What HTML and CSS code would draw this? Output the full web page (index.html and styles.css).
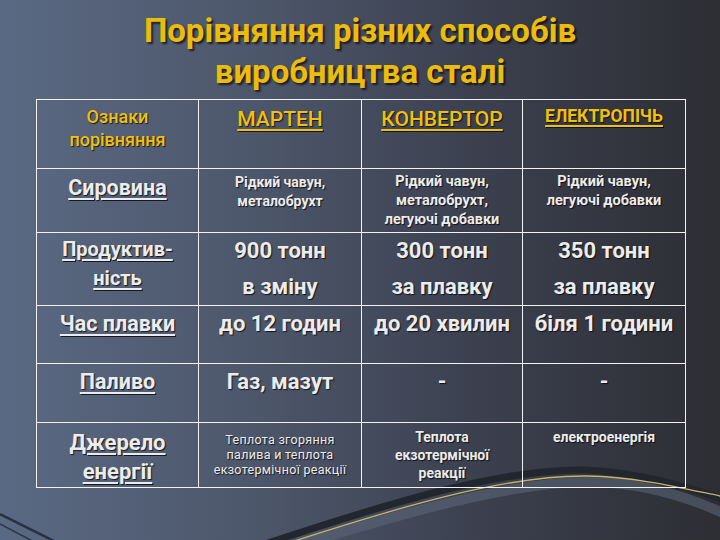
FILE: index.html
```html
<!DOCTYPE html>
<html lang="uk">
<head>
<meta charset="utf-8">
<link rel="stylesheet" href="styles.css">
</head>
<body>
<div class="slide">
  <svg class="deco" width="720" height="540" viewBox="0 0 720 540">
    <path d="M0,514 L62,545" stroke="#27303e" stroke-width="2.5" fill="none"/>
    <path d="M0,524 L40,545" stroke="#2c3442" stroke-width="1.5" fill="none"/>
    <path d="M262,545 C380,506 500,468 585,470 C640,472 690,488 725,500" stroke="#22262e" stroke-width="7" fill="none"/>
    <path d="M290,548 C400,514 510,482 587,482 C645,482 695,500 725,514" stroke="#5d677a" stroke-width="10" fill="none" opacity="0.55"/>
    <path d="M282,545 C393,509 504,475 587,476 C640,477 690,490 725,497" stroke="#c8b468" stroke-width="1.3" fill="none"/>
  </svg>
  <h1 class="title">Порівняння різних способів<br>виробництва сталі</h1>
  <table class="cmp">
    <colgroup>
      <col class="c1"><col class="c2"><col class="c3"><col class="c4">
    </colgroup>
    <tr class="r1">
      <td><div class="hdr-small">Ознаки<br>порівняння</div></td>
      <td><div class="hdr u">МАРТЕН</div></td>
      <td><div class="hdr u">КОНВЕРТОР</div></td>
      <td><div class="hdr-e u">ЕЛЕКТРОПІЧЬ</div></td>
    </tr>
    <tr class="r2">
      <td><div class="lbl u">Сировина</div></td>
      <td><div class="sm12">Рідкий чавун,<br>металобрухт</div></td>
      <td><div class="sm13">Рідкий чавун,<br>металобрухт,<br>легуючі добавки</div></td>
      <td><div class="sm13">Рідкий чавун,<br>легуючі добавки</div></td>
    </tr>
    <tr class="r3">
      <td><div class="lbl2"><span class="u">Продуктив-</span><br><span class="u">ність</span></div></td>
      <td><div class="big2">900 тонн<br>в зміну</div></td>
      <td><div class="big2">300 тонн<br>за плавку</div></td>
      <td><div class="big2">350 тонн<br>за плавку</div></td>
    </tr>
    <tr class="r4">
      <td><div class="lbl u">Час плавки</div></td>
      <td><div class="big">до 12 годин</div></td>
      <td><div class="big">до 20 хвилин</div></td>
      <td><div class="big">біля 1 години</div></td>
    </tr>
    <tr class="r5">
      <td><div class="lbl u">Паливо</div></td>
      <td><div class="big">Газ, мазут</div></td>
      <td><div class="big">-</div></td>
      <td><div class="big">-</div></td>
    </tr>
    <tr class="r6">
      <td><div class="lbl3"><span class="u">Джерело</span><br><span class="u">енергії</span></div></td>
      <td><div class="sm11">Теплота згоряння<br>палива и теплота<br>екзотермічної реакції</div></td>
      <td><div class="sm13b">Теплота<br>екзотермічної<br>реакції</div></td>
      <td><div class="sm13b">електроенергія</div></td>
    </tr>
  </table>
</div>
</body>
</html>
```
FILE: styles.css
```css
html, body {
  margin: 0;
  padding: 0;
}
.slide {
  position: relative;
  width: 720px;
  height: 540px;
  overflow: hidden;
  background: linear-gradient(90deg, #5a6983 0%, #4d576b 35%, #3c4150 65%, #2d2e33 100%);
  font-family: Roboto, "Noto Sans", sans-serif;
  color: #ececec;
}
.deco {
  position: absolute;
  left: 0;
  top: 0;
}
.title {
  position: relative;
  margin: 0;
  padding-top: 10px;
  height: 89px;
  text-align: center;
  font-size: 33px;
  line-height: 41px;
  font-weight: 700;
  color: #ecbc0c;
  text-shadow: 2px 2px 2px rgba(0, 0, 0, 0.65);
}
.cmp {
  position: relative;
  margin-left: 36px;
  width: 649px;
  border-collapse: collapse;
  table-layout: fixed;
}
.c1 { width: 162px; }
.c2 { width: 163px; }
.c3 { width: 161px; }
.c4 { width: 163px; }
.cmp td {
  border: 1px solid #f2f2f2;
  padding: 0;
  vertical-align: top;
  text-align: center;
  font-weight: 700;
  text-shadow: 1px 1px 1px rgba(0, 0, 0, 0.75);
}
.r1 td { height: 68px; }
.r2 td { height: 63px; }
.r3 td { height: 71px; }
.r4 td { height: 57px; }
.r5 td { height: 58px; }
.r6 td { height: 64px; }

.u {
  text-decoration: underline;
  text-decoration-thickness: 2px;
  text-underline-offset: 3px;
}
.hdr-small {
  padding-top: 5px;
  font-size: 18px;
  line-height: 23px;
  font-weight: 500;
  color: #f0c010;
}
.hdr {
  padding-top: 6px;
  font-size: 21px;
  line-height: 26px;
  font-weight: 500;
  color: #f0c010;
}
.hdr-e {
  padding-top: 5px;
  font-size: 17.5px;
  line-height: 22px;
  font-weight: 700;
  color: #f0c010;
}
.lbl {
  padding-top: 4px;
  font-size: 21.5px;
  line-height: 27px;
}
.r2 .lbl { padding-top: 5px; }
.lbl2 {
  padding-top: 2px;
  font-size: 20px;
  line-height: 29px;
}
.lbl3 {
  padding-top: 5px;
  font-size: 22px;
  line-height: 29px;
}
.sm12 {
  padding-top: 4px;
  font-size: 14px;
  line-height: 19px;
}
.sm13 {
  padding-top: 3px;
  font-size: 14.5px;
  line-height: 19px;
}
.sm13b {
  padding-top: 5px;
  font-size: 14px;
  line-height: 18px;
}
.sm11 {
  padding-top: 9px;
  font-size: 12.5px;
  line-height: 15px;
  font-weight: 400;
  letter-spacing: 0.3px;
}
.big {
  padding-top: 4px;
  font-size: 22px;
  line-height: 28px;
}
.big2 {
  padding-top: 0px;
  font-size: 22px;
  line-height: 36px;
}
```
